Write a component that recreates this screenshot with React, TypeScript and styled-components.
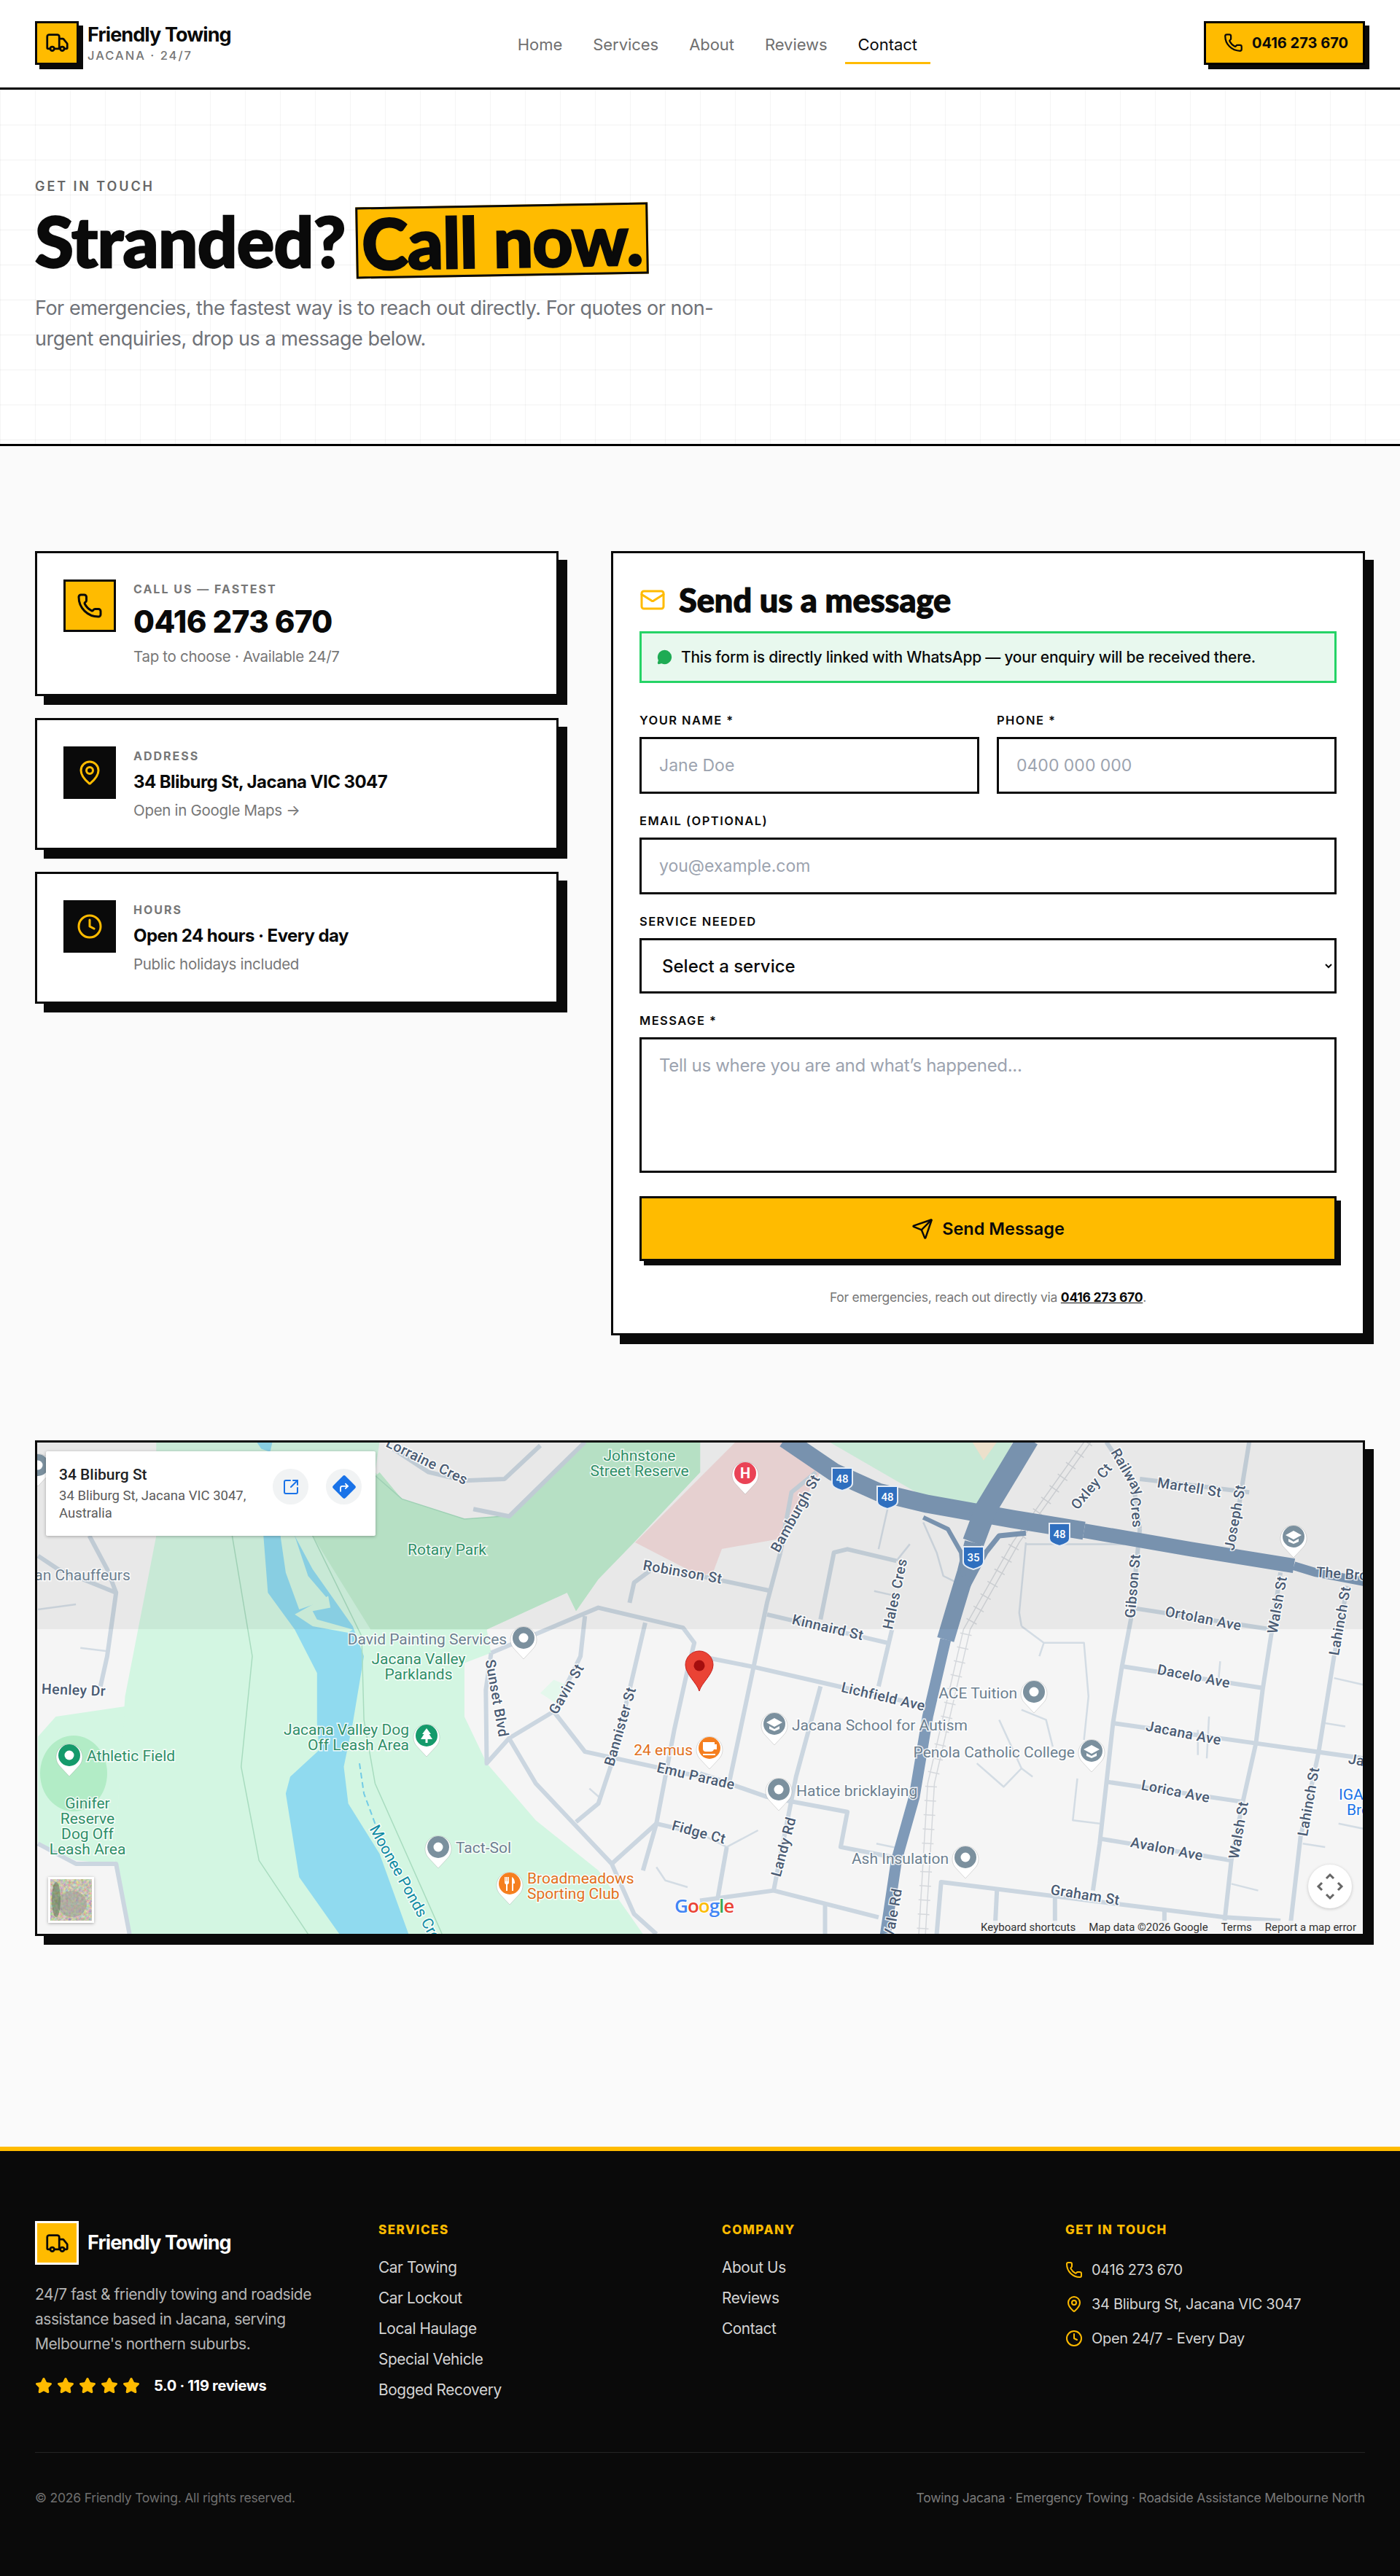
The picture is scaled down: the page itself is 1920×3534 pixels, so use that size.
import styled, { createGlobalStyle } from "styled-components";
import {
  Clock,
  CornerUpRight,
  Mail,
  MapPin,
  MessageCircle,
  Phone,
  Send,
  SquareArrowOutUpRight,
  Star,
  Truck,
} from "lucide-react";

const yellow = "#ffbb00";
const ink = "#0a0a0a";
const bodyFont = `Inter, "Liberation Sans", sans-serif`;
const headFont = `Lato, Inter, sans-serif`;

const GlobalStyle = createGlobalStyle`
  * { box-sizing: border-box; }
  body {
    margin: 0;
    background: #fafafa;
    color: ${ink};
    font-family: ${bodyFont};
  }
`;

// points are read off the reference crops: L is the left crop, R the right one
const conv = (s: string, dx: number) =>
  s
    .split(" ")
    .map((p) => {
      const [x, y] = p.split(",").map(Number);
      return `${(x / 1.633 + dx).toFixed(1)},${(1960 + y / 2.178).toFixed(1)}`;
    })
    .join(" ");
const L = (s: string) => conv(s, 0);
const R = (s: string) => conv(s, 960);

const localRoads = [
  L("1100,670 1340,535 1530,595 1555,640 1540,720 1510,900 1470,1180 1440,1320"),
  L("1100,670 1088,780 1090,1000 1140,925 1240,845"),
  L("1310,560 1300,680 1240,845 1310,965 1568,1040"),
  L("1445,580 1410,780 1370,1000 1340,1120 1290,1175"),
  L("1140,925 1200,1060 1370,1300 1420,1450 1470,1510"),
  L("1470,1180 1568,1210"),
  L("1470,1180 1370,1300"),
  L("1410,520 1420,460 1460,420"),
  L("85,380 130,420 260,490 240,680 225,770"),
  L("200,320 240,420 260,490"),
  L("1060,240 1140,262 1310,40"),
  L("880,60 960,130 1040,155 1130,150 1210,50"),
  L("85,1240 170,1300 260,1300 290,1510"),
  R("0,440 160,485"),
  R("180,370 150,520 120,712 65,1060"),
  R("180,370 205,190 260,130"),
  R("0,680 120,712 310,770 510,830"),
  R("150,555 420,640"),
  R("430,600 400,770"),
  R("270,570 300,370 330,360 440,395"),
  R("0,1030 150,1100 330,1145 315,1250 450,1285"),
  R("0,1410 165,1380 400,1460"),
  R("165,1380 215,1040 270,770"),
  R("985,300 965,570 945,710 925,880 910,1060 895,1240 880,1380"),
  R("910,40 970,160 985,300"),
  R("985,150 1230,190"),
  R("1230,40 1190,370"),
  R("1300,430 1280,610 1260,780 1245,940 1215,1120 1190,1290 1175,1470"),
  R("1450,470 1420,680 1385,970 1345,1220 1320,1510"),
  R("965,535 1280,600"),
  R("945,710 1260,775"),
  R("925,880 1245,940 1485,985"),
  R("910,1055 1215,1115"),
  R("895,1225 1190,1290"),
  R("530,1510 540,1355 1175,1460 1300,1470"),
  R("60,1250 40,1400"),
  R("280,1510 280,1420"),
  R("665,1380 660,1510"),
  R("795,1400 795,1510"),
  R("1040,1440 1040,1510"),
];

const thinRoads = [
  L("85,540 170,525"),
  L("180,655 240,665"),
  L("1320,1075 1345,1105"),
  L("1470,1310 1490,1350 1540,1370"),
  R("0,1210 60,1250 130,1200"),
  R("420,240 400,360"),
  R("440,395 470,345"),
  R("720,590 770,640 860,640 870,800 860,930"),
  R("770,640 760,680"),
  R("720,840 775,870 790,950"),
  R("670,870 720,1015 680,1070 620,1000"),
  R("720,1015 745,1040"),
  R("845,1045 835,1170 895,1180"),
  R("730,340 715,550 720,590"),
  R("730,345 950,345"),
  R("390,485 440,500"),
  R("1165,695 1160,770"),
  R("1140,860 1135,985"),
  R("1115,900 1115,975"),
  R("1400,880 1445,890"),
  R("1420,745 1485,765"),
  R("1430,1180 1485,1195"),
  R("1350,1240 1400,1250"),
  R("1190,1360 1250,1380"),
  R("395,1240 450,1255"),
  R("500,280 530,370 545,440 575,460"),
];

const parkPaths = [
  L("520,320 565,680 540,1010 580,1290 690,1510"),
  L("700,320 810,620 815,870 840,1060 990,1510"),
  L("840,140 900,210 1040,270 1140,260"),
];

type LabelTone = "street" | "poi" | "park" | "food" | "water" | "shop";

type MapLabel = {
  text: string;
  x: number;
  y: number;
  tone: LabelTone;
  rot?: number;
  anchor?: "start" | "middle" | "end";
};

const labels: MapLabel[] = [
  { text: "Johnstone", x: 877, y: 1998, tone: "park" },
  { text: "Street Reserve", x: 877, y: 2019, tone: "park" },
  { text: "Rotary Park", x: 613, y: 2127, tone: "park" },
  { text: "Lorraine Cres", x: 585, y: 2006, tone: "street", rot: 26 },
  { text: "an Chauffeurs", x: 113, y: 2162, tone: "poi" },
  { text: "Henley Dr", x: 101, y: 2320, tone: "street", rot: 2 },
  { text: "David Painting Services", x: 586, y: 2250, tone: "poi" },
  { text: "Jacana Valley", x: 574, y: 2277, tone: "park" },
  { text: "Parklands", x: 574, y: 2298, tone: "park" },
  { text: "Sunset Blvd", x: 680, y: 2330, tone: "street", rot: 80 },
  { text: "Gavin St", x: 778, y: 2318, tone: "street", rot: -60 },
  { text: "Bannister St", x: 852, y: 2369, tone: "street", rot: -74 },
  { text: "Jacana Valley Dog", x: 561, y: 2374, tone: "park", anchor: "end" },
  { text: "Off Leash Area", x: 561, y: 2395, tone: "park", anchor: "end" },
  { text: "Athletic Field", x: 119, y: 2410, tone: "park", anchor: "start" },
  { text: "Ginifer", x: 120, y: 2475, tone: "park" },
  { text: "Reserve", x: 120, y: 2496, tone: "park" },
  { text: "Dog Off", x: 120, y: 2517, tone: "park" },
  { text: "Leash Area", x: 120, y: 2538, tone: "park" },
  { text: "Moonee Ponds Creek", x: 511, y: 2506, tone: "water", rot: 61, anchor: "start" },
  { text: "Tact-Sol", x: 625, y: 2536, tone: "poi", anchor: "start" },
  { text: "Broadmeadows", x: 723, y: 2578, tone: "food", anchor: "start" },
  { text: "Sporting Club", x: 723, y: 2599, tone: "food", anchor: "start" },
  { text: "24 emus", x: 950, y: 2402, tone: "food", anchor: "end" },
  { text: "Robinson St", x: 936, y: 2158, tone: "street", rot: 10 },
  { text: "Emu Parade", x: 954, y: 2438, tone: "street", rot: 13 },
  { text: "Fidge Ct", x: 958, y: 2515, tone: "street", rot: 15 },
  { text: "Kinnaird St", x: 1135, y: 2234, tone: "street", rot: 13 },
  { text: "Lichfield Ave", x: 1211, y: 2329, tone: "street", rot: 13 },
  { text: "Jacana School for Autism", x: 1086, y: 2368, tone: "poi", anchor: "start" },
  { text: "Hatice bricklaying", x: 1092, y: 2458, tone: "poi", anchor: "start" },
  { text: "Penola Catholic College", x: 1474, y: 2405, tone: "poi", anchor: "end" },
  { text: "ACE Tuition", x: 1395, y: 2324, tone: "poi", anchor: "end" },
  { text: "Ash Insulation", x: 1301, y: 2551, tone: "poi", anchor: "end" },
  { text: "Landy Rd", x: 1076, y: 2534, tone: "street", rot: -75 },
  { text: "Vale Rd", x: 1226, y: 2625, tone: "street", rot: -80 },
  { text: "Hales Cres", x: 1229, y: 2187, tone: "street", rot: -78 },
  { text: "Bamburgh St", x: 1092, y: 2077, tone: "street", rot: -61 },
  { text: "Oxley Ct", x: 1498, y: 2040, tone: "street", rot: -50 },
  { text: "Railway", x: 1545, y: 2020, tone: "street", rot: 60 },
  { text: "Cres", x: 1557, y: 2075, tone: "street", rot: 85 },
  { text: "Martell St", x: 1631, y: 2042, tone: "street", rot: 9 },
  { text: "Joseph St", x: 1695, y: 2082, tone: "street", rot: -80 },
  { text: "Gibson St", x: 1555, y: 2176, tone: "street", rot: -85 },
  { text: "The Bro", x: 1805, y: 2158, tone: "street", rot: 4, anchor: "start" },
  { text: "Ortolan Ave", x: 1650, y: 2222, tone: "street", rot: 11 },
  { text: "Walsh St", x: 1753, y: 2202, tone: "street", rot: -80 },
  { text: "Lahinch St", x: 1839, y: 2224, tone: "street", rot: -80 },
  { text: "Dacelo Ave", x: 1637, y: 2301, tone: "street", rot: 11 },
  { text: "Jacana Ave", x: 1623, y: 2379, tone: "street", rot: 11 },
  { text: "Ja", x: 1860, y: 2416, tone: "street", rot: 11 },
  { text: "Lorica Ave", x: 1612, y: 2459, tone: "street", rot: 11 },
  { text: "Avalon Ave", x: 1600, y: 2538, tone: "street", rot: 11 },
  { text: "Walsh St", x: 1700, y: 2511, tone: "street", rot: -80 },
  { text: "Lahinch St", x: 1796, y: 2472, tone: "street", rot: -80 },
  { text: "Graham St", x: 1488, y: 2601, tone: "street", rot: 9 },
  { text: "IGA", x: 1836, y: 2463, tone: "shop", anchor: "start" },
  { text: "Bro", x: 1847, y: 2484, tone: "shop", anchor: "start" },
];

const toneColor: Record<LabelTone, string> = {
  street: "#4a5b73",
  poi: "#6c8090",
  park: "#2f8f68",
  food: "#e2701c",
  water: "#0f8ba3",
  shop: "#1a73e8",
};

type PoiKind = "dot" | "school" | "tree" | "cup" | "fork" | "h";

const pois: { x: number; y: number; color: string; kind: PoiKind }[] = [
  { x: 52, y: 2010, color: "#7b909e", kind: "dot" },
  { x: 718, y: 2247, color: "#7b909e", kind: "dot" },
  { x: 601, y: 2534, color: "#7b909e", kind: "dot" },
  { x: 585, y: 2381, color: "#159a6b", kind: "tree" },
  { x: 95, y: 2408, color: "#159a6b", kind: "dot" },
  { x: 699, y: 2584, color: "#f57f1f", kind: "fork" },
  { x: 1022, y: 2021, color: "#ea4356", kind: "h" },
  { x: 973, y: 2398, color: "#f57f1f", kind: "cup" },
  { x: 1062, y: 2365, color: "#7b909e", kind: "school" },
  { x: 1068, y: 2455, color: "#7b909e", kind: "dot" },
  { x: 1418, y: 2321, color: "#7b909e", kind: "dot" },
  { x: 1497, y: 2402, color: "#7b909e", kind: "school" },
  { x: 1324, y: 2548, color: "#7b909e", kind: "dot" },
  { x: 1774, y: 2108, color: "#7b909e", kind: "school" },
];

const shields = [
  { x: 1155, y: 2029, n: "48" },
  { x: 1217, y: 2054, n: "48" },
  { x: 1453, y: 2105, n: "48" },
  { x: 1335, y: 2137, n: "35" },
];

function PoiPin({ x, y, color, kind }: (typeof pois)[number]) {
  return (
    <g transform={`translate(${x} ${y})`}>
      <path
        d="M0 29 L-13 15 A18 18 0 1 1 13 15 Z"
        fill="#fff"
        stroke="#00000022"
        strokeWidth="1"
      />
      <circle r="15" fill={color} />
      {kind === "dot" && <circle r="6.5" fill="#fff" />}
      {kind === "school" && (
        <path d="M0 -8 L11 -2 L0 4 L-11 -2 Z M-7 3 V7 L0 10 L7 7 V3 L0 7 Z" fill="#fff" />
      )}
      {kind === "tree" && (
        <path d="M0 -10 L6 -2 H3.5 L8 5 H1.5 V10 H-1.5 V5 H-8 L-3.5 -2 H-6 Z" fill="#fff" />
      )}
      {kind === "cup" && (
        <path d="M-9 -8 H7 V-5 H10 V2 H6 Q5 5 2 5 H-5 Q-9 5 -9 1 Z M-9 8 H8 V10 H-9 Z" fill="#fff" />
      )}
      {kind === "fork" && (
        <path d="M-7 -9 V-2 Q-7 1 -5 1 V10 H-3 V1 Q-1 1 -1 -2 V-9 H-2.5 V-3 H-3.2 V-9 H-4.8 V-3 H-5.5 V-9 Z M3 -9 Q7 -7 7 0 H5 V10 H3 Z" fill="#fff" />
      )}
      {kind === "h" && <PinLetter textAnchor="middle" y="7">H</PinLetter>}
    </g>
  );
}

function RoadMap() {
  return (
    <MapSvg viewBox="51 1979 1818 674" preserveAspectRatio="none">
      <rect x="51" y="1979" width="1818" height="674" fill="#f5f5f5" />
      <polygon
        fill="#d3f6e2"
        points={L(
          "350,40 850,40 840,130 900,210 1040,270 1140,260 1310,40 1568,40 1568,130 1420,340 1340,450 1290,545 1270,490 1090,600 1100,670 1040,700 1040,860 1090,1000 1200,1170 1340,1320 1440,1510 290,1510 255,1300 280,800 350,320"
        )}
      />
      <polygon
        fill="#c0edcf"
        points={L(
          "700,320 850,130 900,210 1040,270 1140,260 1310,40 1568,40 1568,130 1420,340 1340,450 1290,545 1270,490 1090,600 830,600 760,450"
        )}
      />
      <polygon fill="#d3f6e2" points={L("85,920 125,860 280,830 255,1300 170,1290 85,1240")} />
      <ellipse cx="101" cy="2433" rx="46" ry="52" fill="#b2ecc6" />
      <polygon fill="#d3f6e2" points={R("290,40 510,210 630,235 700,40")} />
      <polygon fill="#f9ecd6" points={R("610,40 665,40 635,95")} />
      <polygon fill="#e4f8ec" points={L("1210,790 1240,750 1285,775 1245,820")} />
      <polygon
        fill="#f3dcdc"
        points="871,2116 1008,1979 1080,1979 1125,2020 1070,2111 990,2125 978,2157 960,2162"
      />
      <polygon
        fill="#90daef"
        points={L(
          "590,320 600,490 660,600 710,730 710,880 715,960 650,1040 640,1090 670,1340 760,1510 915,1510 850,1270 780,1120 770,1010 790,880 815,680 790,590 700,420 660,320"
        )}
      />
      <polygon fill="#90daef" points={L("575,40 610,40 605,70 585,60")} />
      <polygon fill="#d3f6e2" points={L("628,320 660,320 690,440 735,510 670,540 640,430")} />
      <polygon fill="#d3f6e2" points={L("660,555 735,500 740,535 700,545 710,570 790,600 780,610 700,590")} />
      {parkPaths.map((p) => (
        <GreenPath key={p} points={p} />
      ))}
      <CreekPath points={L("805,1000 815,1090 840,1180")} />
      <RailLine points={R("860,40 700,340 590,600 510,1060 490,1510")} />
      <RailLine points={R("875,40 715,340 605,600 525,1060 505,1510")} />
      <RailTies points={R("868,40 708,340 598,600 518,1060 498,1510")} />
      {thinRoads.map((p) => (
        <ThinRoad key={p} points={p} />
      ))}
      {localRoads.map((p) => (
        <LocalRoad key={p} points={p} />
      ))}
      <Motorway $w={25} points={R("190,30 300,130 400,190 510,225 700,270 860,305")} />
      <Motorway $w={20} points={R("860,305 1100,360 1330,410")} />
      <Motorway $w={12} points={R("1330,410 1380,430 1490,458")} />
      <Motorway $w={30} points={R("735,30 690,130 640,240 612,340")} />
      <Motorway $w={24} points={R("612,340 595,430 570,540 550,630")} />
      <Motorway $w={15} points={R("550,630 510,860 480,1100 440,1290 415,1515")} />
      <Motorway $w={6} points={R("500,265 555,300 585,370 590,440")} />
      <Motorway $w={7} points={R("730,312 670,320 640,370 600,470")} />
      <rect x="51" y="1979" width="1818" height="256" fill="#000" opacity="0.05" />
      {shields.map((s) => (
        <g key={s.x} transform={`translate(${s.x} ${s.y})`}>
          <path d="M-14 -15 H14 V6 Q14 12 0 16 Q-14 12 -14 6 Z" fill="#2f6fbf" stroke="#e6ecf4" strokeWidth="2" />
          <ShieldText textAnchor="middle" y="5">{s.n}</ShieldText>
        </g>
      ))}
      {labels.map((l) => (
        <Label
          key={`${l.text}${l.x}`}
          x={l.x}
          y={l.y}
          $tone={l.tone}
          textAnchor={l.anchor ?? "middle"}
          dominantBaseline="middle"
          transform={l.rot ? `rotate(${l.rot} ${l.x} ${l.y})` : undefined}
        >
          {l.text}
        </Label>
      ))}
      {pois.map((p) => (
        <PoiPin key={`${p.x}${p.y}`} {...p} />
      ))}
      <g transform="translate(959 2285)">
        <path
          d="M0 35 C-3 24 -19 12 -19 -1 A19 19 0 1 1 19 -1 C19 12 3 24 0 35 Z"
          fill="#ea4335"
          stroke="#c5221f"
          strokeWidth="1"
        />
        <circle r="7.5" fill="#a50e0e" />
      </g>
      <GoogleMark x="925" y="2624">
        <tspan fill="#4285f4">G</tspan>
        <tspan fill="#ea4335">o</tspan>
        <tspan fill="#fbbc05">o</tspan>
        <tspan fill="#4285f4">g</tspan>
        <tspan fill="#34a853">l</tspan>
        <tspan fill="#ea4335">e</tspan>
      </GoogleMark>
    </MapSvg>
  );
}

export default function App() {
  return (
    <>
      <GlobalStyle />
      <Header>
        <Brand>
          <LogoBox>
            <Truck size={33} strokeWidth={2} />
          </LogoBox>
          <div>
            <BrandName>Friendly Towing</BrandName>
            <BrandSub>JACANA · 24/7</BrandSub>
          </div>
        </Brand>
        <Nav>
          <NavLink>Home</NavLink>
          <NavLink>Services</NavLink>
          <NavLink>About</NavLink>
          <NavLink>Reviews</NavLink>
          <NavLink $active>Contact</NavLink>
        </Nav>
        <CallButton>
          <Phone size={27} strokeWidth={2} />
          0416 273 670
        </CallButton>
      </Header>

      <Hero>
        <Eyebrow>GET IN TOUCH</Eyebrow>
        <HeroTitle>
          Stranded? <Highlight>Call now.</Highlight>
        </HeroTitle>
        <HeroText>
          For emergencies, the fastest way is to reach out directly. For quotes
          or non-urgent enquiries, drop us a message below.
        </HeroText>
      </Hero>

      <Main>
        <ContactGrid>
          <InfoColumn>
            <InfoCard>
              <InfoIcon $accent>
                <Phone size={36} strokeWidth={2} />
              </InfoIcon>
              <div>
                <InfoLabel>CALL US — FASTEST</InfoLabel>
                <PhoneValue>0416 273 670</PhoneValue>
                <InfoNote>Tap to choose · Available 24/7</InfoNote>
              </div>
            </InfoCard>
            <InfoCard>
              <InfoIcon>
                <MapPin size={36} strokeWidth={2} />
              </InfoIcon>
              <div>
                <InfoLabel>ADDRESS</InfoLabel>
                <InfoValue>34 Bliburg St, Jacana VIC 3047</InfoValue>
                <InfoNote>Open in Google Maps →</InfoNote>
              </div>
            </InfoCard>
            <InfoCard>
              <InfoIcon>
                <Clock size={36} strokeWidth={2} />
              </InfoIcon>
              <div>
                <InfoLabel>HOURS</InfoLabel>
                <InfoValue>Open 24 hours · Every day</InfoValue>
                <InfoNote>Public holidays included</InfoNote>
              </div>
            </InfoCard>
          </InfoColumn>

          <FormCard>
            <FormTitle>
              <Mail size={36} strokeWidth={2} color={yellow} />
              Send us a message
            </FormTitle>
            <Banner>
              <MessageCircle size={21} fill="#1fab54" color="#1fab54" />
              This form is directly linked with WhatsApp — your enquiry will be
              received there.
            </Banner>
            <FieldRow>
              <Field>
                <FieldLabel>YOUR NAME *</FieldLabel>
                <TextInput placeholder="Jane Doe" />
              </Field>
              <Field>
                <FieldLabel>PHONE *</FieldLabel>
                <TextInput placeholder="0400 000 000" />
              </Field>
            </FieldRow>
            <Field>
              <FieldLabel>EMAIL (OPTIONAL)</FieldLabel>
              <TextInput placeholder="you@example.com" />
            </Field>
            <Field>
              <FieldLabel>SERVICE NEEDED</FieldLabel>
              <SelectInput defaultValue="">
                <option value="">Select a service</option>
                <option>Car Towing</option>
                <option>Car Lockout</option>
              </SelectInput>
            </Field>
            <Field>
              <FieldLabel>MESSAGE *</FieldLabel>
              <MessageInput placeholder="Tell us where you are and what’s happened..." />
            </Field>
            <SubmitButton type="button">
              <Send size={30} strokeWidth={2} />
              Send Message
            </SubmitButton>
            <FormNote>
              For emergencies, reach out directly via <a>0416 273 670</a>.
            </FormNote>
          </FormCard>
        </ContactGrid>

        <MapFrame>
          <RoadMap />
          <PlaceCard>
            <PlaceText>
              <PlaceName>34 Bliburg St</PlaceName>
              <PlaceAddress>34 Bliburg St, Jacana VIC 3047, Australia</PlaceAddress>
            </PlaceText>
            <RoundAction>
              <SquareArrowOutUpRight size={24} color="#1a73e8" strokeWidth={2} />
            </RoundAction>
            <RoundAction>
              <DirectionDiamond>
                <CornerUpRight size={15} color="#fff" strokeWidth={3} />
              </DirectionDiamond>
            </RoundAction>
          </PlaceCard>
          <SatelliteThumb>
            <svg width="57" height="57" viewBox="0 0 57 57">
              <filter id="sat-noise">
                <feTurbulence type="fractalNoise" baseFrequency="0.28" numOctaves="3" seed="7" />
                <feColorMatrix
                  values="0.9 0 0 0 0.12  0 0.8 0 0 0.14  0 0 0.7 0 0.08  0 0 0 0 1"
                />
              </filter>
              <rect width="57" height="57" filter="url(#sat-noise)" />
              <ellipse cx="30" cy="34" rx="20" ry="18" fill="#9a9c96" opacity="0.55" />
              <ellipse cx="8" cy="28" rx="6" ry="24" fill="#4d6d48" opacity="0.5" />
            </svg>
          </SatelliteThumb>
          <Compass>
            <svg width="40" height="40" viewBox="0 0 40 40" fill="none" stroke="#666" strokeWidth="3">
              <path d="M15 9 L20 4 L25 9" />
              <path d="M15 31 L20 36 L25 31" />
              <path d="M9 15 L4 20 L9 25" />
              <path d="M31 15 L36 20 L31 25" />
            </svg>
          </Compass>
          <Attribution>
            <span>Keyboard shortcuts</span>
            <span>Map data ©2026 Google</span>
            <span>Terms</span>
            <span>Report a map error</span>
          </Attribution>
        </MapFrame>
      </Main>

      <Footer>
        <FooterGrid>
          <div>
            <FooterBrand>
              <FooterLogo>
                <Truck size={33} strokeWidth={2} />
              </FooterLogo>
              <BrandName $light>Friendly Towing</BrandName>
            </FooterBrand>
            <FooterAbout>
              24/7 fast &amp; friendly towing and roadside assistance based in
              Jacana, serving Melbourne's northern suburbs.
            </FooterAbout>
            <Rating>
              <Stars>
                {[0, 1, 2, 3, 4].map((i) => (
                  <Star key={i} size={24} fill={yellow} color={yellow} />
                ))}
              </Stars>
              5.0 · 119 reviews
            </Rating>
          </div>
          <div>
            <ColumnTitle>SERVICES</ColumnTitle>
            <LinkList>
              <li>Car Towing</li>
              <li>Car Lockout</li>
              <li>Local Haulage</li>
              <li>Special Vehicle</li>
              <li>Bogged Recovery</li>
            </LinkList>
          </div>
          <div>
            <ColumnTitle>COMPANY</ColumnTitle>
            <LinkList>
              <li>About Us</li>
              <li>Reviews</li>
              <li>Contact</li>
            </LinkList>
          </div>
          <div>
            <ColumnTitle>GET IN TOUCH</ColumnTitle>
            <ContactList>
              <li>
                <Phone size={24} color={yellow} />
                0416 273 670
              </li>
              <li>
                <MapPin size={24} color={yellow} />
                34 Bliburg St, Jacana VIC 3047
              </li>
              <li>
                <Clock size={24} color={yellow} />
                Open 24/7 - Every Day
              </li>
            </ContactList>
          </div>
        </FooterGrid>
        <FooterBottom>
          <span>© 2026 Friendly Towing. All rights reserved.</span>
          <FooterSeo>Towing Jacana · Emergency Towing · Roadside Assistance Melbourne North</FooterSeo>
        </FooterBottom>
      </Footer>
    </>
  );
}

const Header = styled.header`
  display: flex;
  align-items: center;
  justify-content: space-between;
  height: 123px;
  padding: 0 48px 3px;
  background: #fff;
  border-bottom: 3px solid #000;
`;

const Brand = styled.div`
  display: flex;
  align-items: center;
  gap: 12px;
`;

const LogoBox = styled.div`
  display: flex;
  align-items: center;
  justify-content: center;
  width: 60px;
  height: 60px;
  background: ${yellow};
  border: 3px solid ${ink};
  box-shadow: 6px 6px 0 ${ink};
`;

const BrandName = styled.div<{ $light?: boolean }>`
  font-size: 27px;
  line-height: 34px;
  font-weight: 700;
  letter-spacing: -0.9px;
  white-space: nowrap;
  color: ${({ $light }) => ($light ? "#fff" : ink)};
`;

const BrandSub = styled.div`
  font-size: 16.5px;
  line-height: 22px;
  font-weight: 500;
  letter-spacing: 2px;
  color: #777;
`;

const Nav = styled.nav`
  display: flex;
  gap: 6px;
`;

const NavLink = styled.a<{ $active?: boolean }>`
  padding: 17px 18px 9px;
  font-size: 22px;
  line-height: 30px;
  font-weight: 400;
  letter-spacing: -0.05px;
  color: ${({ $active }) => ($active ? ink : "#6f6f6f")};
  border-bottom: 3px solid ${({ $active }) => ($active ? yellow : "transparent")};
`;

const CallButton = styled.a`
  display: flex;
  align-items: center;
  gap: 12px;
  width: 221px;
  height: 60px;
  padding-left: 24px;
  background: ${yellow};
  border: 3px solid #000;
  box-shadow: 6px 6px 0 ${ink};
  font-size: 20px;
  font-weight: 700;
  white-space: nowrap;
`;

const Hero = styled.section`
  height: 489px;
  padding: 119px 48px 0;
  background-color: #fff;
  background-image: linear-gradient(rgba(0, 0, 0, 0.05) 1px, transparent 1px),
    linear-gradient(90deg, rgba(0, 0, 0, 0.04) 1px, transparent 1px);
  background-size: 48px 48px;
  border-bottom: 3px solid #000;
`;

const Eyebrow = styled.div`
  font-size: 18px;
  line-height: 28px;
  font-weight: 600;
  letter-spacing: 2.9px;
  color: #666;
`;

const HeroTitle = styled.h1`
  margin: 11px 0 0;
  font-family: ${headFont};
  font-size: 96px;
  line-height: 96px;
  font-weight: 900;
  letter-spacing: -0.7px;
  color: ${ink};
  white-space: nowrap;
  -webkit-text-stroke: 2.4px ${ink};
`;

const Highlight = styled.span`
  display: inline-block;
  margin-left: -8px;
  padding: 0 5px;
  line-height: 92px;
  background: ${yellow};
  border: 3px solid ${ink};
  transform: rotate(-1deg);
`;

const HeroText = styled.p`
  width: 960px;
  margin: 23px 0 0;
  font-size: 27px;
  line-height: 42px;
  letter-spacing: -0.48px;
  color: #6f7278;
`;

const Main = styled.main`
  padding: 144px 48px 289px;
`;

const ContactGrid = styled.div`
  display: grid;
  grid-template-columns: 718px 1fr;
  gap: 72px;
  align-items: start;
`;

const InfoColumn = styled.div`
  display: flex;
  flex-direction: column;
  gap: 30px;
`;

const InfoCard = styled.div`
  display: flex;
  align-items: flex-start;
  gap: 24px;
  padding: 36px;
  background: #fff;
  border: 3px solid ${ink};
  box-shadow: 12px 12px 0 ${ink};
`;

const InfoIcon = styled.div<{ $accent?: boolean }>`
  display: flex;
  flex-shrink: 0;
  align-items: center;
  justify-content: center;
  width: 72px;
  height: 72px;
  border: 3px solid ${ink};
  background: ${({ $accent }) => ($accent ? yellow : ink)};
  color: ${({ $accent }) => ($accent ? ink : yellow)};
`;

const InfoLabel = styled.div`
  font-size: 16px;
  line-height: 26px;
  font-weight: 700;
  letter-spacing: 2px;
  color: #777;
`;

const PhoneValue = styled.div`
  margin-top: 5px;
  font-size: 42px;
  line-height: 54px;
  font-weight: 800;
  letter-spacing: -0.6px;
`;

const InfoValue = styled.div`
  margin-top: 5px;
  font-size: 24px;
  line-height: 36px;
  font-weight: 700;
  letter-spacing: -0.55px;
`;

const InfoNote = styled.div`
  margin-top: 6px;
  font-size: 20.5px;
  line-height: 30px;
  letter-spacing: -0.3px;
  color: #777;
`;

const FormCard = styled.div`
  display: flex;
  flex-direction: column;
  gap: 24px;
  height: 1076px;
  padding: 36px;
  background: #fff;
  border: 3px solid ${ink};
  box-shadow: 12px 12px 0 ${ink};
`;

const FormTitle = styled.h2`
  display: flex;
  align-items: center;
  gap: 18px;
  height: 60px;
  margin: 0 0 -12px;
  padding-bottom: 4px;
  font-family: ${headFont};
  font-size: 45px;
  font-weight: 900;
  letter-spacing: 0;
  -webkit-text-stroke: 1.2px ${ink};
`;

const Banner = styled.div`
  display: flex;
  align-items: center;
  gap: 12px;
  height: 72px;
  margin-bottom: 14px;
  padding: 0 21px;
  background: #e8f8ee;
  border: 3px solid #25d366;
  font-size: 21px;
  font-weight: 500;
  letter-spacing: -0.25px;
`;

const FieldRow = styled.div`
  display: grid;
  grid-template-columns: 1fr 1fr;
  gap: 24px;
`;

const Field = styled.div`
  display: flex;
  flex-direction: column;
`;

const FieldLabel = styled.label`
  height: 27px;
  margin-bottom: 9px;
  font-size: 16.5px;
  line-height: 27px;
  font-weight: 600;
  letter-spacing: 1.45px;
`;

const TextInput = styled.input`
  height: 78px;
  padding: 0 24px;
  border: 3px solid ${ink};
  border-radius: 0;
  background: #fff;
  font-family: ${bodyFont};
  font-size: 23px;
  outline: none;

  &::placeholder {
    color: #9ca3af;
    opacity: 1;
  }
`;

const SelectInput = styled.select`
  height: 76px;
  padding: 0 24px;
  border: 3px solid ${ink};
  border-radius: 0;
  background: #fff;
  color: ${ink};
  font-family: ${bodyFont};
  font-size: 24px;
  font-weight: 500;
`;

const MessageInput = styled.textarea`
  height: 186px;
  padding: 21px 24px;
  border: 3px solid ${ink};
  border-radius: 0;
  resize: none;
  font-family: ${bodyFont};
  font-size: 24px;
  letter-spacing: -0.3px;
  outline: none;

  &::placeholder {
    color: #9ca3af;
    opacity: 1;
  }
`;

const SubmitButton = styled.button`
  display: flex;
  align-items: center;
  justify-content: center;
  gap: 12px;
  height: 90px;
  margin-top: 8px;
  padding: 0;
  background: ${yellow};
  border: 3px solid ${ink};
  box-shadow: 6px 6px 0 ${ink};
  color: ${ink};
  font-family: ${bodyFont};
  font-size: 23.5px;
  font-weight: 600;
`;

const FormNote = styled.div`
  margin-top: 12px;
  font-size: 17.5px;
  line-height: 27px;
  letter-spacing: -0.25px;
  text-align: center;
  color: #777;

  a {
    color: ${ink};
    font-weight: 700;
    text-decoration: underline;
  }
`;

const MapFrame = styled.div`
  position: relative;
  height: 680px;
  margin-top: 144px;
  border: 3px solid ${ink};
  box-shadow: 12px 12px 0 ${ink};
  overflow: visible;
`;

const MapSvg = styled.svg`
  display: block;
  width: 100%;
  height: 100%;
`;

const Label = styled.text<{ $tone: LabelTone }>`
  font-family: Roboto, sans-serif;
  font-size: ${({ $tone }) => ($tone === "street" ? 19.5 : 21)}px;
  font-weight: ${({ $tone }) => ($tone === "street" ? 500 : 400)};
  letter-spacing: ${({ $tone }) => ($tone === "street" ? 0.4 : 0)}px;
  fill: ${({ $tone }) => toneColor[$tone]};
  stroke: #fff;
  stroke-width: 3px;
  stroke-opacity: 0.85;
  paint-order: stroke;
`;

const PinLetter = styled.text`
  font-family: Roboto, sans-serif;
  font-size: 20px;
  font-weight: 700;
  fill: #fff;
`;

const ShieldText = styled.text`
  font-family: Roboto, sans-serif;
  font-size: 15px;
  font-weight: 500;
  fill: #fff;
`;

const GoogleMark = styled.text`
  font-family: "Open Sans", sans-serif;
  font-size: 26px;
  font-weight: 600;
  letter-spacing: -1px;
  stroke: #fff;
  stroke-width: 2px;
  paint-order: stroke;
`;

const LocalRoad = styled.polyline`
  fill: none;
  stroke: #cbd6e0;
  stroke-width: 6;
  stroke-linejoin: round;
`;

const ThinRoad = styled.polyline`
  fill: none;
  stroke: #d3dce4;
  stroke-width: 2.5;
  stroke-linejoin: round;
`;

const Motorway = styled.polyline<{ $w: number }>`
  fill: none;
  stroke: #7f9ab8;
  stroke-width: ${({ $w }) => $w};
  stroke-linejoin: round;
`;

const GreenPath = styled.polyline`
  fill: none;
  stroke: #a8dcbf;
  stroke-width: 1.5;
`;

const CreekPath = styled.polyline`
  fill: none;
  stroke: #72cbe6;
  stroke-width: 2;
  stroke-dasharray: 8 5;
`;

const RailLine = styled.polyline`
  fill: none;
  stroke: #d5d8dc;
  stroke-width: 1.5;
`;

const RailTies = styled.polyline`
  fill: none;
  stroke: #d5d8dc;
  stroke-width: 16;
  stroke-dasharray: 1.5 18;
`;

const PlaceCard = styled.div`
  position: absolute;
  top: 12px;
  left: 12px;
  display: flex;
  align-items: flex-start;
  width: 452px;
  height: 116px;
  padding: 18px 18px 0;
  background: #fff;
  border-radius: 2px;
  box-shadow: 0 1px 4px rgba(0, 0, 0, 0.3);
  font-family: Roboto, sans-serif;
`;

const PlaceText = styled.div`
  width: 270px;
  margin-right: 23px;
`;

const PlaceName = styled.div`
  font-size: 21px;
  line-height: 28px;
  font-weight: 500;
  color: #202124;
`;

const PlaceAddress = styled.div`
  margin-top: 3px;
  font-size: 18.5px;
  line-height: 24px;
  color: #5b5b5b;
`;

const RoundAction = styled.div`
  display: flex;
  flex-shrink: 0;
  align-items: center;
  justify-content: center;
  width: 49px;
  height: 49px;
  margin-top: 6px;
  border-radius: 50%;
  background: #f1f3f4;

  & + & {
    margin-left: 24px;
  }
`;

const DirectionDiamond = styled.div`
  display: flex;
  align-items: center;
  justify-content: center;
  width: 24px;
  height: 24px;
  background: #1a73e8;
  border-radius: 3px;
  transform: rotate(45deg);

  svg {
    transform: rotate(-45deg);
  }
`;

const SatelliteThumb = styled.div`
  position: absolute;
  left: 15px;
  top: 596px;
  width: 63px;
  height: 63px;
  border: 3px solid #fff;
  box-shadow: 0 1px 4px rgba(0, 0, 0, 0.3);

  svg {
    display: block;
  }
`;

const Compass = styled.div`
  position: absolute;
  right: 15px;
  top: 579px;
  display: flex;
  align-items: center;
  justify-content: center;
  width: 60px;
  height: 60px;
  border-radius: 50%;
  background: #fff;
  box-shadow: 0 1px 4px rgba(0, 0, 0, 0.2);
`;

const Attribution = styled.div`
  position: absolute;
  right: 0;
  bottom: 0;
  display: flex;
  gap: 18px;
  height: 18px;
  padding: 0 9px 0 6px;
  background: rgba(245, 245, 245, 0.85);
  font-family: Roboto, sans-serif;
  font-size: 15px;
  line-height: 18px;
  color: #333;
`;

const Footer = styled.footer`
  height: 589px;
  padding: 96px 48px 0;
  background: ${ink};
  border-top: 6px solid ${yellow};
`;

const FooterGrid = styled.div`
  display: grid;
  grid-template-columns: repeat(4, 1fr);
  gap: 60px;
  height: 318px;
  border-bottom: 1.5px solid #242424;
`;

const FooterBrand = styled.div`
  display: flex;
  align-items: center;
  gap: 12px;
`;

const FooterLogo = styled.div`
  display: flex;
  align-items: center;
  justify-content: center;
  width: 60px;
  height: 60px;
  background: ${yellow};
  border: 3px solid #fff;
  color: ${ink};
`;

const FooterAbout = styled.p`
  margin: 24px 0 0;
  font-size: 21px;
  line-height: 34px;
  letter-spacing: -0.45px;
  color: #b5b5b5;
`;

const Rating = styled.div`
  display: flex;
  align-items: center;
  margin-top: 28px;
  font-size: 20px;
  font-weight: 700;
  letter-spacing: -0.3px;
  color: #fff;
`;

const Stars = styled.div`
  display: flex;
  gap: 6px;
  margin-right: 19px;
`;

const ColumnTitle = styled.h3`
  margin: 0;
  padding-bottom: 22px;
  font-size: 17px;
  line-height: 24px;
  font-weight: 800;
  letter-spacing: 1.5px;
  color: ${yellow};
`;

const LinkList = styled.ul`
  margin: 0;
  padding: 0;
  list-style: none;

  li {
    height: 42px;
    font-size: 20.8px;
    line-height: 36px;
    letter-spacing: -0.4px;
    color: #d4d4d4;
  }
`;

const ContactList = styled.ul`
  margin: -3px 0 0;
  padding: 0;
  list-style: none;

  li {
    display: flex;
    align-items: center;
    gap: 12px;
    height: 47px;
    font-size: 20px;
    letter-spacing: -0.3px;
    color: #d4d4d4;
  }
`;

const FooterBottom = styled.div`
  display: flex;
  justify-content: space-between;
  margin-top: 48px;
  font-size: 17.5px;
  line-height: 27px;
  letter-spacing: -0.2px;
  color: #6f6f6f;
`;

const FooterSeo = styled.span`
  color: #7a7a7a;
`;
